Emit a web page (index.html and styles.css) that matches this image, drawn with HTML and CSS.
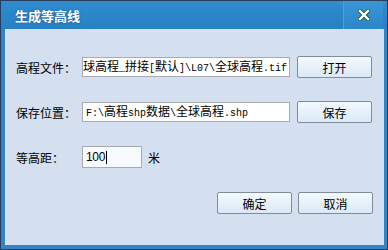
FILE: index.html
```html
<!DOCTYPE html>
<html lang="zh-CN">
<head>
    <meta charset="UTF-8">
    <title>生成等高线</title>
    <link rel="stylesheet" href="styles.css">
</head>
<body>
    <div class="window">
        <div class="title-bar">
            <span class="title">生成等高线</span>
            <div class="close-btn">
                <svg width="12" height="12" viewBox="0 0 12 12">
                    <path d="M2 2 L10 10 M10 2 L2 10" stroke="#1f4d33" stroke-width="4" stroke-linecap="square"/>
                    <path d="M2 2 L10 10 M10 2 L2 10" stroke="#ffffff" stroke-width="2.4" stroke-linecap="square"/>
                </svg>
            </div>
        </div>
        <div class="content">
            <div class="form">
                <label class="label">高程文件：</label>
                <div class="field path">
                    <span>球高程<span class="a">_</span>拼接<span class="a">[</span>默认<span class="a">]\L07\</span>全球高程<span class="a">.tif</span></span>
                </div>
                <button class="btn">打开</button>

                <label class="label">保存位置：</label>
                <div class="field">
                    <span><span class="a">F:\</span>高程<span class="a">shp</span>数据<span class="a">\</span>全球高程<span class="a">.shp</span></span>
                </div>
                <button class="btn">保存</button>

                <label class="label">等高距：</label>
                <div class="spacing">
                    <div class="field small"><span class="num">100</span><span class="caret"></span></div>
                    <span class="unit">米</span>
                </div>
            </div>
            <div class="actions">
                <button class="btn">确定</button>
                <button class="btn">取消</button>
            </div>
        </div>
    </div>
</body>
</html>
```

FILE: styles.css
```css
body {
    margin: 0;
    font-family: "Noto Sans CJK SC", "Liberation Sans", sans-serif;
    font-size: 12px;
    color: #000;
    background: #ffffff;
}

.window {
    width: 386px;
    height: 248px;
    border: 1px solid #2a3d58;
    background: #3483c6;
    display: flex;
    flex-direction: column;
}

.title-bar {
    height: 28px;
    display: flex;
    align-items: stretch;
    background: linear-gradient(to bottom, #2f8dd0, #2680c4);
}

.title {
    flex: 1;
    padding-left: 14px;
    display: flex;
    align-items: center;
    color: #ffffff;
    font-size: 13px;
    font-weight: bold;
    text-shadow: 0 0 2px rgba(20, 50, 90, 0.6);
}

.close-btn {
    width: 39px;
    margin-right: 4px;
    border-left: 1px solid #4d9fd9;
    background: linear-gradient(to bottom, #3a96d6, #2b86c8);
    display: flex;
    align-items: center;
    justify-content: center;
}

.content {
    flex: 1;
    margin: 0 3px 4px 4px;
    background: #d4e0f0;
    padding: 27px 11px 0 11px;
    display: flex;
    flex-direction: column;
}

.form {
    display: grid;
    grid-template-columns: 59px 208px 75px;
    grid-auto-rows: 22px;
    column-gap: 7px;
    row-gap: 23px;
    align-items: center;
}

.label {
    white-space: nowrap;
}

.field {
    height: 18px;
    border: 1px solid #a7abb0;
    background: #ffffff;
    display: flex;
    align-items: center;
    justify-content: flex-start;
    padding: 0 3px;
    overflow: hidden;
    white-space: nowrap;
    line-height: 18px;
}

.field.path {
    justify-content: flex-end;
    padding: 0 2px 0 0;
}

.a {
    font-family: "Liberation Mono", monospace;
    font-size: 10px;
}

.spacing {
    grid-column: span 2;
    display: flex;
    align-items: center;
    gap: 6px;
}

.field.small {
    width: 52px;
    height: 20px;
    background: #f7faff;
}

.num {
    font-family: "Liberation Sans", sans-serif;
    font-size: 12px;
    letter-spacing: -0.3px;
}

.caret {
    display: inline-block;
    width: 1px;
    height: 13px;
    background: #000;
    margin-left: 1px;
}

.btn {
    width: 75px;
    height: 22px;
    border: 1px solid #7f8c99;
    border-radius: 2px;
    background: linear-gradient(to bottom, #f3f9fe, #dbe8f6);
    font-family: "Noto Sans CJK SC", sans-serif;
    font-size: 12px;
    color: #000;
    padding: 0;
}

.actions {
    margin-top: 24px;
    display: flex;
    justify-content: flex-end;
    gap: 6px;
}
```
